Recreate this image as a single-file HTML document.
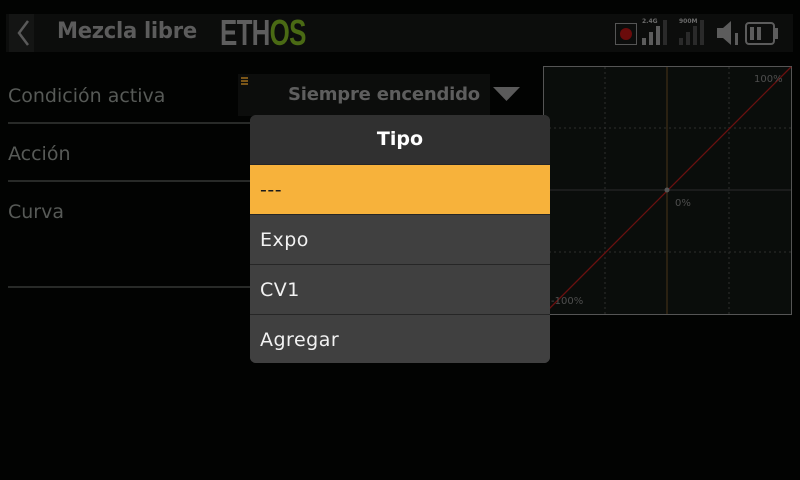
<!DOCTYPE html>
<html><head><meta charset="utf-8"><style>
*{margin:0;padding:0;box-sizing:border-box}
body{width:800px;height:480px;background:#020302;position:relative;overflow:hidden;font-family:"DejaVu Sans","Liberation Sans",sans-serif}
.abs{position:absolute}
.lbl{position:absolute;left:8px;color:#575a57;font-size:19px}
.ln{position:absolute;left:8px;width:242px;height:2px;background:#282a28}
.row{position:absolute;left:0;width:300px;height:50px;background:#404040;color:#f2f2f2;font-size:19px;padding-left:10px;line-height:50px;letter-spacing:0.5px;border-top:1px solid #262626}
</style></head><body>
<div class="abs" style="left:6px;top:14px;width:787px;height:38px;background:#0c0d0c"></div>
<div class="abs" style="left:9px;top:14px;width:25px;height:38px;background:#141514"></div>
<svg class="abs" style="left:14px;top:18px" width="20" height="30"><path d="M14 3 L5 15 L14 27" stroke="#5a5a5a" stroke-width="2.5" fill="none"/></svg>
<div class="abs" style="left:57px;top:19px;color:#5c5c5c;font-size:22px;font-weight:bold;font-family:'DejaVu Sans',sans-serif;letter-spacing:-0.3px;transform:scaleX(0.96);transform-origin:left">Mezcla libre</div>
<div class="abs" style="left:220px;top:15px;font-family:'Liberation Sans',sans-serif;font-weight:bold;font-size:36px;letter-spacing:-1px;line-height:36px;transform:scaleX(0.72);transform-origin:left"><span style="color:#5e5e5e">ETH</span><span style="color:#4a6a14">OS</span></div>
<!-- status -->
<div class="abs" style="left:615px;top:23px;width:22px;height:22px;border:1px solid #555"></div>
<div class="abs" style="left:620px;top:28px;width:12px;height:12px;border-radius:50%;background:#6a0b0b"></div>
<div class="abs" style="left:642px;top:18px;color:#6a6a6a;font-size:6px;font-weight:bold">2.4G</div>
<div class="abs" style="left:642px;top:38px;width:4px;height:7px;background:#5c5c5c"></div>
<div class="abs" style="left:649px;top:32px;width:4px;height:13px;background:#5c5c5c"></div>
<div class="abs" style="left:656px;top:26px;width:4px;height:19px;background:#5c5c5c"></div>
<div class="abs" style="left:663px;top:20px;width:4px;height:25px;background:#2a2a2a"></div>
<div class="abs" style="left:679px;top:18px;color:#6a6a6a;font-size:6px;font-weight:bold">900M</div>
<div class="abs" style="left:679px;top:38px;width:4px;height:7px;background:#2a2a2a"></div>
<div class="abs" style="left:686px;top:32px;width:4px;height:13px;background:#2a2a2a"></div>
<div class="abs" style="left:693px;top:26px;width:4px;height:19px;background:#2a2a2a"></div>
<div class="abs" style="left:700px;top:20px;width:4px;height:25px;background:#2a2a2a"></div>
<svg class="abs" style="left:716px;top:20px" width="26" height="26"><path d="M1 8 H7 L15 1 V25 L7 18 H1Z" fill="#5c5c5c"/><rect x="19" y="13" width="3" height="12" fill="#5c5c5c"/></svg>
<div class="abs" style="left:745px;top:22px;width:30px;height:23px;border:2px solid #5c5c5c;border-radius:4px"></div>
<div class="abs" style="left:775px;top:28px;width:3px;height:11px;background:#5c5c5c"></div>
<div class="abs" style="left:750px;top:27px;width:4px;height:13px;background:#5c5c5c"></div>
<div class="abs" style="left:757px;top:27px;width:4px;height:13px;background:#5c5c5c"></div>
<!-- fields -->
<div class="lbl" style="top:85px">Condición activa</div>
<div class="ln" style="top:122px"></div>
<div class="lbl" style="top:143px">Acción</div>
<div class="ln" style="top:180px"></div>
<div class="lbl" style="top:201px">Curva</div>
<div class="ln" style="top:286px"></div>
<div class="abs" style="left:238px;top:74px;width:252px;height:42px;background:#0c0d0c"></div>
<div class="abs" style="left:241px;top:77px;width:7px;height:2px;background:#7a5518"></div>
<div class="abs" style="left:241px;top:80px;width:7px;height:2px;background:#7a5518"></div>
<div class="abs" style="left:241px;top:83px;width:7px;height:2px;background:#7a5518"></div>
<div class="abs" style="left:288px;top:84px;color:#5e5e5e;font-size:18px;font-weight:bold;letter-spacing:-0.2px">Siempre encendido</div>
<svg class="abs" style="left:493px;top:86px" width="28" height="16"><path d="M0 1 H27 L13.5 15Z" fill="#5a5a5a"/></svg>
<!-- graph -->
<svg class="abs" style="left:543px;top:66px" width="250" height="250">
<rect x="0.5" y="0.5" width="248" height="248" fill="#0a0d0b" stroke="#555"/>
<g stroke="#2e2e2e" stroke-dasharray="2,3"><line x1="62" y1="1" x2="62" y2="248"/><line x1="186" y1="1" x2="186" y2="248"/><line x1="1" y1="62" x2="248" y2="62"/><line x1="1" y1="186" x2="248" y2="186"/></g>
<line x1="1" y1="124" x2="248" y2="124" stroke="#2c2c2c"/>
<line x1="124" y1="1" x2="124" y2="248" stroke="#4a3518"/>
<line x1="1" y1="248" x2="248" y2="1" stroke="#6a1010" stroke-width="1.3"/>
<circle cx="124" cy="124" r="2.5" fill="#555"/>
<text x="211" y="16" fill="#4e4e4e" font-size="10" font-family="DejaVu Sans">100%</text>
<text x="132" y="140" fill="#4e4e4e" font-size="10" font-family="DejaVu Sans">0%</text>
<text x="8" y="238" fill="#4e4e4e" font-size="10" font-family="DejaVu Sans">-100%</text>
</svg>
<!-- popup -->
<div class="abs" style="left:250px;top:115px;width:300px;height:248px;border-radius:6px;overflow:hidden;background:#404040">
<div class="abs" style="left:0;top:0;width:300px;height:50px;background:#303030;color:#fff;font-weight:bold;font-size:19px;text-align:center;line-height:48px">Tipo</div>
<div class="row" style="top:49px;background:#f7b23b;color:#1a1a1a;border-top:1px solid #262626">---</div>
<div class="row" style="top:99px">Expo</div>
<div class="row" style="top:149px">CV1</div>
<div class="row" style="top:199px">Agregar</div>
</div>
</body></html>
